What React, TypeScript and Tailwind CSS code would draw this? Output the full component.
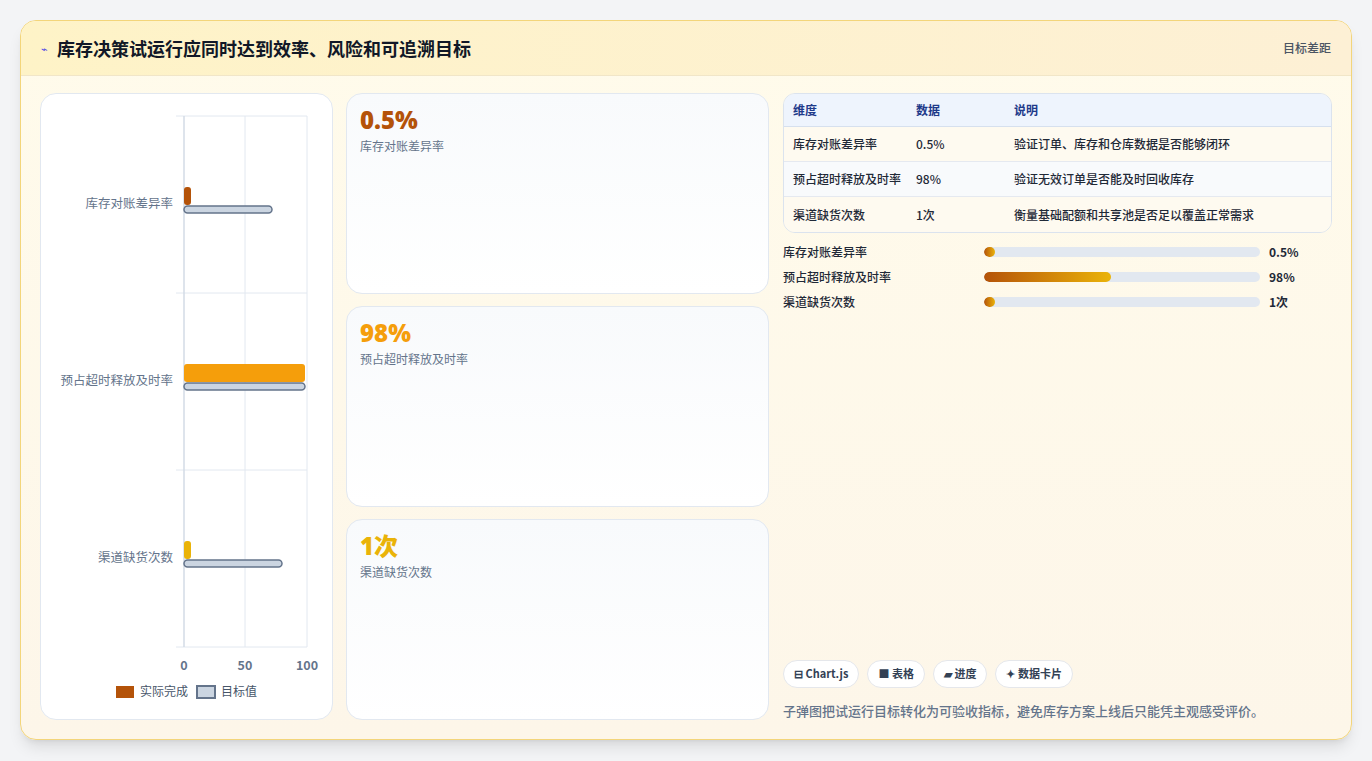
import React from "react";

const F = { fontFamily: '"Noto Sans CJK SC","Noto Sans",sans-serif' };

function Chart() {
  const rows = [
    { label: "库存对账差异率", y: 93, c: "#b45309", a: 150, t: 231 },
    { label: "预占超时释放及时率", y: 270, c: "#f59e0b", a: 264, t: 264 },
    { label: "渠道缺货次数", y: 447, c: "#eab308", a: 150, t: 241 },
  ];
  return (
    <svg width="292" height="625" className="block">
      {[22, 199, 376, 553].map((y) => (
        <line key={y} x1="135" x2="266" y1={y} y2={y} stroke="#e2e8f0" />
      ))}
      {[143, 204, 266].map((x) => (
        <line key={x} x1={x} x2={x} y1="22" y2="553" stroke="#e2e8f0" />
      ))}
      <line x1="143" x2="143" y1="22" y2="553" stroke="#cbd5e1" />
      {rows.map((r) => (
        <g key={r.label}>
          <text x="132" y={r.y + 21} textAnchor="end" fontSize="12.5" fill="#64748b" style={F}>{r.label}</text>
          <rect x="143" y={r.y} width={r.a - 143} height="18" rx="3" fill={r.c} />
          <rect x="143" y={r.y + 19} width={r.t - 143} height="7" rx="3.5" fill="#cbd5e1" stroke="#64748b" strokeWidth="1.5" />
        </g>
      ))}
      {[["0", 143], ["50", 204], ["100", 266]].map(([t, x]) => (
        <text key={t} x={x as number} y="576" textAnchor="middle" fontSize="12.5" fontWeight="600" fill="#64748b" style={F}>{t}</text>
      ))}
      <rect x="75" y="592" width="18" height="12" fill="#b45309" />
      <text x="99" y="602" fontSize="12" fill="#475569" style={F}>实际完成</text>
      <rect x="156" y="592" width="18" height="12" fill="#cbd5e1" stroke="#64748b" strokeWidth="2" />
      <text x="180" y="602" fontSize="12" fill="#475569" style={F}>目标值</text>
    </svg>
  );
}

function Metric({ v, l, c }: { v: string; l: string; c: string }) {
  return (
    <div className="flex-1 rounded-2xl border border-[#e2e8f0] bg-gradient-to-b from-[#f8fafc] to-white px-[13px] pt-[10px]">
      <div className={`text-[24px] font-extrabold leading-[32px] ${c}`} style={{ fontFamily: '"Open Sans","Noto Sans CJK SC",sans-serif' }}>{v}</div>
      <div className="text-[12px] text-[#64748b] mt-[1px]">{l}</div>
    </div>
  );
}

export default function App() {
  const table = [
    ["库存对账差异率", "0.5%", "验证订单、库存和仓库数据是否能够闭环"],
    ["预占超时释放及时率", "98%", "验证无效订单是否能及时回收库存"],
    ["渠道缺货次数", "1次", "衡量基础配额和共享池是否足以覆盖正常需求"],
  ];
  const prog = [
    ["库存对账差异率", 2, "0.5%"],
    ["预占超时释放及时率", 46, "98%"],
    ["渠道缺货次数", 2, "1次"],
  ] as const;
  return (
    <div className="w-[1372px] h-[761px] bg-[#f3f4f6] p-[20px]" style={F}>
      <div className="h-[720px] rounded-[16px] border border-[#f3d57a] bg-gradient-to-b from-[#fffbeb] to-[#fdf6e9] overflow-hidden flex flex-col shadow-lg">
        <div className="h-[55px] shrink-0 flex items-center justify-between px-[20px] bg-gradient-to-r from-[#fef3c7] to-[#fdf0d5] border-b border-[#f1e6c8]">
          <div className="flex items-center gap-[9px]">
            <span className="text-[#4f46e5] text-[11px]">⌁</span>
            <span className="text-[18px] font-bold text-[#111827]">库存决策试运行应同时达到效率、风险和可追溯目标</span>
          </div>
          <span className="text-[12px] text-[#4b5563] font-medium">目标差距</span>
        </div>
        <div className="flex-1 flex gap-[13px] px-[19px] pt-[17px] pb-[19px]">
          <div className="w-[293px] rounded-2xl border border-[#e2e8f0] bg-white">
            <Chart />
          </div>
          <div className="w-[423px] flex flex-col gap-[12px]">
            <Metric v="0.5%" l="库存对账差异率" c="text-[#b45309]" />
            <Metric v="98%" l="预占超时释放及时率" c="text-[#f59e0b]" />
            <Metric v="1次" l="渠道缺货次数" c="text-[#eab308]" />
          </div>
          <div className="flex-1 flex flex-col pl-[1px]">
            <div className="rounded-[12px] border border-[#dbe3ee] overflow-hidden text-[12px]">
              <div className="flex h-[33px] items-center bg-[#eef4fd] border-b border-[#d6e0ee] text-[#1e3a8a] font-semibold">
                <div className="w-[132px] pl-[9px]">维度</div>
                <div className="w-[98px]">数据</div>
                <div>说明</div>
              </div>
              {table.map((r, i) => (
                <div key={i} className={`flex h-[35px] items-center text-[#1f2937] font-medium ${i === 1 ? "bg-[#f8fafc]" : "bg-[#fefaf0]"} ${i < 2 ? "border-b border-[#e5e9f0]" : ""}`}>
                  <div className="w-[132px] pl-[9px]">{r[0]}</div>
                  <div className="w-[98px]">{r[1]}</div>
                  <div>{r[2]}</div>
                </div>
              ))}
            </div>
            <div className="mt-[10px] flex flex-col gap-[7px]">
              {prog.map(([l, w, v]) => (
                <div key={l} className="flex items-center h-[18px] text-[12px] font-medium text-[#1f2937]">
                  <div className="w-[201px]">{l}</div>
                  <div className="w-[276px] h-[10px] rounded-full bg-[#e2e8f0] overflow-hidden">
                    <div className="h-full rounded-full bg-gradient-to-r from-[#b45309] to-[#eab308]" style={{ width: w === 2 ? "11px" : `${w}%` }} />
                  </div>
                  <div className="ml-[9px] font-bold">{v}</div>
                </div>
              ))}
            </div>
            <div className="flex-1" />
            <div className="flex gap-[8px]">
              {["⊟ Chart.js", "■ 表格", "▰ 进度", "✦ 数据卡片"].map((t) => (
                <span key={t} className="h-[28px] px-[10px] flex items-center rounded-full border border-[#e5e7eb] bg-white text-[11px] font-semibold text-[#334155]">{t}</span>
              ))}
            </div>
            <div className="mt-[13px] text-[13px] font-medium text-[#64748b]">子弹图把试运行目标转化为可验收指标，避免库存方案上线后只能凭主观感受评价。</div>
          </div>
        </div>
      </div>
    </div>
  );
}
